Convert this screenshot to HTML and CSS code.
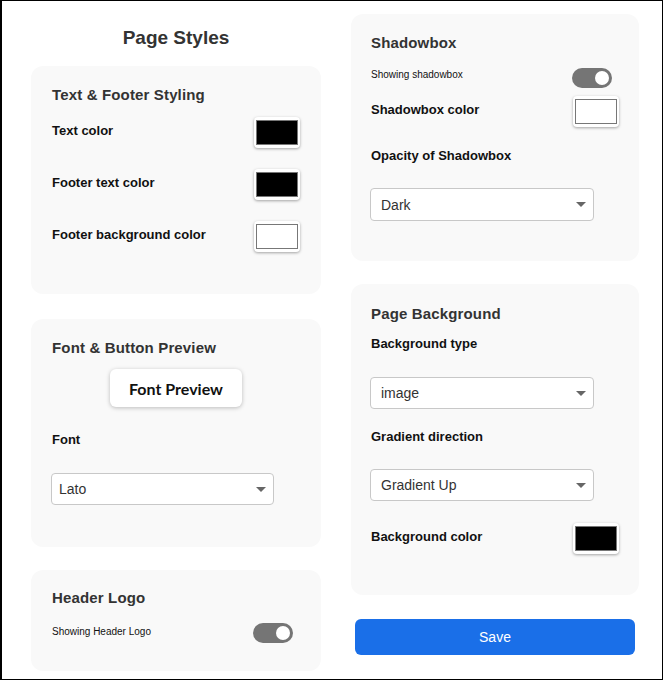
FILE: index.html
```html
<!DOCTYPE html>
<html>
<head>
<meta charset="utf-8">
<link rel="stylesheet" href="styles.css">
</head>
<body>
<div class="frame">
  <div class="col col-left">
    <h1 class="page-title">Page Styles</h1>

    <section class="card card-text">
      <h2 class="card-title">Text &amp; Footer Styling</h2>
      <div class="rows">
        <div class="row">
          <span class="label">Text color</span>
          <span class="swatch"><span class="swatch-fill fill-black"></span></span>
        </div>
        <div class="row">
          <span class="label">Footer text color</span>
          <span class="swatch"><span class="swatch-fill fill-black"></span></span>
        </div>
        <div class="row">
          <span class="label">Footer background color</span>
          <span class="swatch"><span class="swatch-fill fill-white"></span></span>
        </div>
      </div>
    </section>

    <section class="card card-font">
      <h2 class="card-title">Font &amp; Button Preview</h2>
      <div class="preview-wrap">
        <button class="preview-btn">Font Preview</button>
      </div>
      <div class="label field-label font-label">Font</div>
      <div class="select"><span>Lato</span><span class="arrow"></span></div>
    </section>

    <section class="card card-logo">
      <h2 class="card-title">Header Logo</h2>
      <div class="row toggle-row">
        <span class="small">Showing Header Logo</span>
        <span class="toggle"><span class="knob"></span></span>
      </div>
    </section>
  </div>

  <div class="col col-right">
    <section class="card card-shadow">
      <h2 class="card-title">Shadowbox</h2>
      <div class="row toggle-row">
        <span class="small">Showing shadowbox</span>
        <span class="toggle"><span class="knob"></span></span>
      </div>
      <div class="row sb-color">
        <span class="label">Shadowbox color</span>
        <span class="swatch"><span class="swatch-fill fill-white"></span></span>
      </div>
      <div class="label field-label opacity-label">Opacity of Shadowbox</div>
      <div class="select select-opacity"><span>Dark</span><span class="arrow"></span></div>
    </section>

    <section class="card card-bg">
      <h2 class="card-title">Page Background</h2>
      <div class="label field-label bgtype-label">Background type</div>
      <div class="select select-bgtype"><span>image</span><span class="arrow"></span></div>
      <div class="label field-label grad-label">Gradient direction</div>
      <div class="select select-grad"><span>Gradient Up</span><span class="arrow"></span></div>
      <div class="row bg-color">
        <span class="label">Background color</span>
        <span class="swatch"><span class="swatch-fill fill-black"></span></span>
      </div>
    </section>

    <button class="save-btn">Save</button>
  </div>
</div>
</body>
</html>
```

FILE: styles.css
```css
* { box-sizing: border-box; }
html, body { margin: 0; padding: 0; background: #fff; }
body { font-family: "Liberation Sans", Arial, sans-serif; color: #111; }

.frame {
  width: 663px;
  height: 680px;
  border: 1px solid #000;
  border-left-width: 2px;
  display: grid;
  grid-template-columns: 290px 288px;
  column-gap: 30px;
  padding-left: 29px;
  align-items: start;
}

.col { display: flex; flex-direction: column; }
.col-left { padding-top: 25px; }
.col-right { padding-top: 13px; }

.page-title {
  margin: 0 0 16px;
  font-size: 19px;
  line-height: 24px;
  font-weight: 700;
  color: #333;
  text-align: center;
}

.card {
  background: #f9f9f9;
  border-radius: 12px;
  padding: 20px 21px;
}
.col-right .card { padding-left: 20px; padding-right: 20px; }

.card-title {
  margin: 0;
  font-size: 15px;
  line-height: 18px;
  font-weight: 700;
  color: #333;
  letter-spacing: 0.15px;
}

.label {
  font-size: 13px;
  line-height: 16px;
  font-weight: 700;
  color: #111;
}

.row {
  display: flex;
  align-items: center;
  justify-content: space-between;
}
.row .label { padding-bottom: 4px; }

.swatch {
  width: 46px;
  height: 31px;
  background: #fff;
  border-radius: 4px;
  padding: 3px 2px;
  box-shadow: 0 1px 3px rgba(0,0,0,0.35);
  display: flex;
}
.swatch-fill { flex: 1; border: 1px solid #777; }
.fill-black { background: #000; }
.fill-white { background: #fff; }

/* Card 1 */
.card-text { height: 228px; margin-bottom: 25px; }
.rows { display: flex; flex-direction: column; gap: 21px; margin-top: 13px; }

/* Card 2 */
.card-font { height: 228px; margin-bottom: 23px; }
.preview-wrap { display: flex; justify-content: center; margin-top: 12px; }
.preview-btn {
  width: 132px;
  height: 38px;
  border: none;
  background: #fff;
  border-radius: 6px;
  box-shadow: 0 1px 4px rgba(0,0,0,0.25);
  font-family: Lato, "Liberation Sans", sans-serif;
  font-weight: 700;
  font-size: 16px;
  color: #111;
  padding: 0;
}
.font-label { margin-top: 25px; }

.select {
  width: 224px;
  height: 32px;
  margin-left: -1px;
  background: #fff;
  border: 1px solid #c8c8c8;
  border-radius: 4px;
  display: flex;
  align-items: center;
  justify-content: space-between;
  padding: 0 7px 0 10px;
  font-size: 14px;
  color: #333;
}
.card-font .select { margin-top: 25px; width: 223px; padding-left: 7px; }
.arrow {
  width: 0; height: 0;
  border-left: 5px solid transparent;
  border-right: 5px solid transparent;
  border-top: 5px solid #666;
}

/* Card 3 */
.card-logo { height: 101px; padding-top: 19px; }
.small { font-size: 10px; line-height: 12px; color: #111; }
.toggle {
  width: 40px;
  height: 20px;
  border-radius: 10px;
  background: #757575;
  display: flex;
  align-items: center;
  justify-content: flex-end;
  padding-right: 3px;
  margin-right: 7px;
}
.knob { width: 14px; height: 14px; border-radius: 50%; background: #fff; }
.card-logo .toggle-row { margin-top: 16px; }
.card-logo .small { padding-bottom: 2px; }

/* Right card 1 */
.card-shadow { height: 247px; margin-bottom: 23px; }
.card-shadow .toggle-row { margin-top: 16px; height: 19px; }
.card-shadow .small { padding-bottom: 6px; }
.sb-color { margin-top: 9px; }
.opacity-label { margin-top: 21px; }
.select-opacity { margin-top: 24px; height: 33px; }

/* Right card 2 */
.card-bg { height: 311px; padding-top: 21px; }
.bgtype-label { margin-top: 13px; }
.select-bgtype { margin-top: 25px; }
.grad-label { margin-top: 20px; }
.select-grad { margin-top: 24px; }
.bg-color { margin-top: 22px; }

.save-btn {
  margin: 24px 4px 0;
  height: 36px;
  border: none;
  border-radius: 6px;
  background: #1a6fe8;
  color: #fff;
  font-family: "Liberation Sans", Arial, sans-serif;
  font-size: 14px;
}
```
